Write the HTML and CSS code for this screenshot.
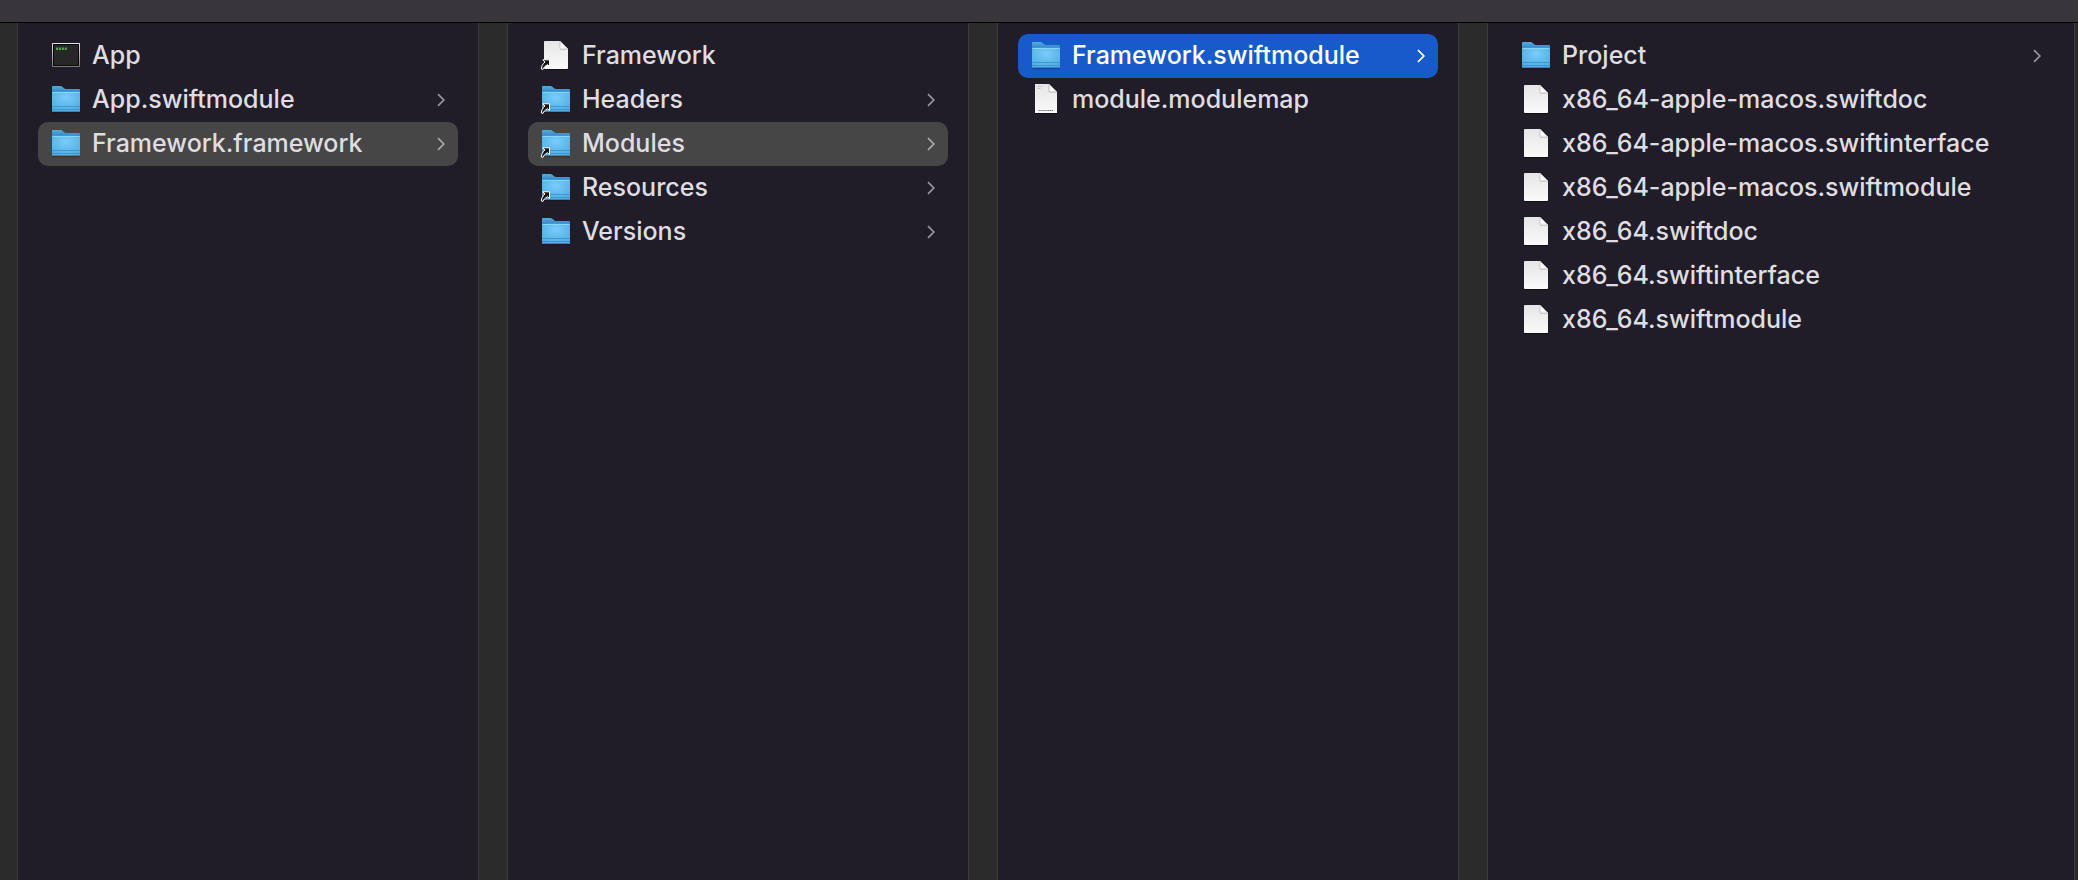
FILE: index.html
```html
<!DOCTYPE html>
<html lang="en">
<head>
<meta charset="utf-8">
<title>Framework.swiftmodule</title>
<link rel="stylesheet" href="styles.css">
</head>
<body>
<svg class="sprite" aria-hidden="true">
  <defs>
    <linearGradient id="folder-back" x1="0" y1="0" x2="0" y2="1">
      <stop offset="0" stop-color="#55acdf"/><stop offset=".25" stop-color="#2f86c6"/><stop offset="1" stop-color="#2f86c6"/>
    </linearGradient>
    <radialGradient id="folder-front" cx=".5" cy=".3" r=".8">
      <stop offset="0" stop-color="#78cdfa"/><stop offset="1" stop-color="#4ca8de"/>
    </radialGradient>
    <linearGradient id="paper" x1="0" y1="0" x2="0" y2="1">
      <stop offset="0" stop-color="#e6e6e6"/><stop offset="1" stop-color="#fafafa"/>
    </linearGradient>
    <linearGradient id="bezel" x1="0" y1="0" x2="0" y2="1">
      <stop offset="0" stop-color="#dfe8ee"/><stop offset="1" stop-color="#77787a"/>
    </linearGradient>
    <symbol id="folder" viewBox="0 0 28 32" overflow="visible">
      <path d="M0 28.500h28v.8H0z" fill="#000" opacity=".35"/>
      <path d="M0 3a1 1 0 0 1 1-1h7.500q1 0 1.800.7l1.800 1.500q.8.700 2 .7H27a1 1 0 0 1 1 1V27H0z" fill="url(#folder-back)"/>
      <path d="M0 8.500q0-.8.800-.8h26.400q.8 0 .8.800V27a1 1 0 0 1-1 1H1a1 1 0 0 1-1-1z" fill="url(#folder-front)"/>
      <path d="M.5 8.500h27" stroke="#86d6fb"/>
      <path d="M0 22.500h28M0 25.500h28" stroke="#3d98cf"/>
      <path d="M.5 27.500h27" stroke="#3284bb"/>
    </symbol>
    <symbol id="document" viewBox="0 0 28 32" overflow="visible">
      <path d="M2.500 29.500h23" stroke="#000" opacity=".4"/>
      <path d="M2 2a1 1 0 0 1 1-1h15l8 8v19a1 1 0 0 1-1 1H3a1 1 0 0 1-1-1z" fill="url(#paper)"/>
      <path d="M18 9.500h8l-8-1z" fill="#bdbdbd"/>
      <path d="M18 1l8 8h-7a1 1 0 0 1-1-1z" fill="#fff" stroke="#b5b5b5" stroke-width=".7"/>
    </symbol>
    <symbol id="text-document" viewBox="0 0 28 32" overflow="visible">
      <path d="M3 29.500h22" stroke="#000" opacity=".5"/>
      <path d="M3 0h14l8 8v21H3z" fill="url(#paper)"/>
      <path d="M17 0l8 8h-7a1 1 0 0 1-1-1z" fill="#fff" stroke="#aaa" stroke-width=".8"/>
      <path d="M5.500 2.500h4.500M5.500 4.500h3" stroke="#bbb" stroke-width=".8"/>
      <path d="M6.500 26.500h15" stroke="#777" stroke-dasharray="1.400 .5"/>
    </symbol>
    <symbol id="executable" viewBox="0 0 28 32" overflow="visible">
      <rect x="0" y="3" width="28" height="24" rx=".8" fill="url(#bezel)"/>
      <path d="M1 4h26v22H1z" fill="#080808"/>
      <path d="M2 5h24v20H2z" fill="#262726"/>
      <path d="M4 8.700h11" stroke="#4fa64c" stroke-width="2.400" stroke-dasharray="2.100 .8"/>
    </symbol>
    <symbol id="alias" viewBox="0 0 28 32" overflow="visible">
      <path d="M.8 19.800H7.500V26.500L5.600 24.700C3 26 1.700 27.400 1 29.400L-.7 29C-.6 26.200.8 24 2.900 22z" fill="#151515" stroke="#fff" stroke-width="1" stroke-linejoin="round"/>
    </symbol>
    <symbol id="chevron" viewBox="0 0 8 14">
      <path d="M1 1.200L6.800 7L1 12.800" fill="none" stroke="currentColor" stroke-width="1.700"/>
    </symbol>
  </defs>
</svg>

<header class="toolbar"></header>
<main class="browser">
  <ul class="column" aria-label="Build products">
    <li><a class="row" href="#app"><svg class="icon"><use href="#executable"/></svg><span class="name">App</span></a></li>
    <li><a class="row" href="#app-swiftmodule"><svg class="icon"><use href="#folder"/></svg><span class="name">App.swiftmodule</span><svg class="chevron"><use href="#chevron"/></svg></a></li>
    <li><a class="row row-open" href="#framework-framework"><svg class="icon"><use href="#folder"/></svg><span class="name">Framework.framework</span><svg class="chevron"><use href="#chevron"/></svg></a></li>
  </ul>
  <ul class="column" aria-label="Framework.framework">
    <li><a class="row" href="#framework"><svg class="icon"><use href="#document"/><use href="#alias"/></svg><span class="name">Framework</span></a></li>
    <li><a class="row" href="#headers"><svg class="icon"><use href="#folder"/><use href="#alias"/></svg><span class="name">Headers</span><svg class="chevron"><use href="#chevron"/></svg></a></li>
    <li><a class="row row-open" href="#modules"><svg class="icon"><use href="#folder"/><use href="#alias"/></svg><span class="name">Modules</span><svg class="chevron"><use href="#chevron"/></svg></a></li>
    <li><a class="row" href="#resources"><svg class="icon"><use href="#folder"/><use href="#alias"/></svg><span class="name">Resources</span><svg class="chevron"><use href="#chevron"/></svg></a></li>
    <li><a class="row" href="#versions"><svg class="icon"><use href="#folder"/></svg><span class="name">Versions</span><svg class="chevron"><use href="#chevron"/></svg></a></li>
  </ul>
  <ul class="column" aria-label="Modules">
    <li><a class="row row-selected" href="#framework-swiftmodule" aria-current="true"><svg class="icon"><use href="#folder"/></svg><span class="name">Framework.swiftmodule</span><svg class="chevron"><use href="#chevron"/></svg></a></li>
    <li><a class="row" href="#modulemap"><svg class="icon"><use href="#text-document"/></svg><span class="name">module.modulemap</span></a></li>
  </ul>
  <ul class="column column-last" aria-label="Framework.swiftmodule">
    <li><a class="row" href="#project"><svg class="icon"><use href="#folder"/></svg><span class="name">Project</span><svg class="chevron"><use href="#chevron"/></svg></a></li>
    <li><a class="row" href="#macos-swiftdoc"><svg class="icon"><use href="#document"/></svg><span class="name">x86_64-apple-macos.swiftdoc</span></a></li>
    <li><a class="row" href="#macos-swiftinterface"><svg class="icon"><use href="#document"/></svg><span class="name">x86_64-apple-macos.swiftinterface</span></a></li>
    <li><a class="row" href="#macos-swiftmodule"><svg class="icon"><use href="#document"/></svg><span class="name">x86_64-apple-macos.swiftmodule</span></a></li>
    <li><a class="row" href="#x86-swiftdoc"><svg class="icon"><use href="#document"/></svg><span class="name">x86_64.swiftdoc</span></a></li>
    <li><a class="row" href="#x86-swiftinterface"><svg class="icon"><use href="#document"/></svg><span class="name">x86_64.swiftinterface</span></a></li>
    <li><a class="row" href="#x86-swiftmodule"><svg class="icon"><use href="#document"/></svg><span class="name">x86_64.swiftmodule</span></a></li>
  </ul>
</main>
</body>
</html>
```
FILE: styles.css
```css
* {
  box-sizing: border-box;
}

body {
  display: flex;
  flex-direction: column;
  min-height: 100vh;
  margin: 0;
  background: #2b2b2b;
  color: #dfdde1;
  font-family: Inter, "Liberation Sans", sans-serif;
  font-size: 25px;
  font-weight: 500;
  line-height: 32px;
}

.sprite {
  position: absolute;
  width: 0;
  height: 0;
}

.toolbar {
  height: 23px;
  background: #38353b;
  border-bottom: 1px solid #000;
}

.browser {
  display: flex;
  flex: 1;
  gap: 28px;
  padding: 0 3px 0 17px;
}

.column {
  flex: 0 0 462px;
  margin: 0;
  padding: 11px 20px;
  list-style: none;
  background: #211d28;
  border: solid #3b3a3d;
  border-width: 0 1px;
}

.column-last {
  flex: 1 0 462px;
}

.row {
  display: flex;
  align-items: center;
  height: 44px;
  padding: 0 13px 0 14px;
  border-radius: 10px;
  color: inherit;
  text-decoration: none;
}

.row-open {
  background: #464646;
}

.row-selected {
  background: #175bca;
  color: #fff;
}

.icon {
  flex: none;
  width: 28px;
  height: 32px;
  margin-right: 12px;
  overflow: visible;
}

.name {
  flex: 1;
  padding-bottom: 2px;
  white-space: nowrap;
}

.chevron {
  flex: none;
  width: 8px;
  height: 14px;
  color: #98969c;
}

.row-open .chevron {
  color: #a9a9a9;
}

.row-selected .chevron {
  color: #fff;
}
```
